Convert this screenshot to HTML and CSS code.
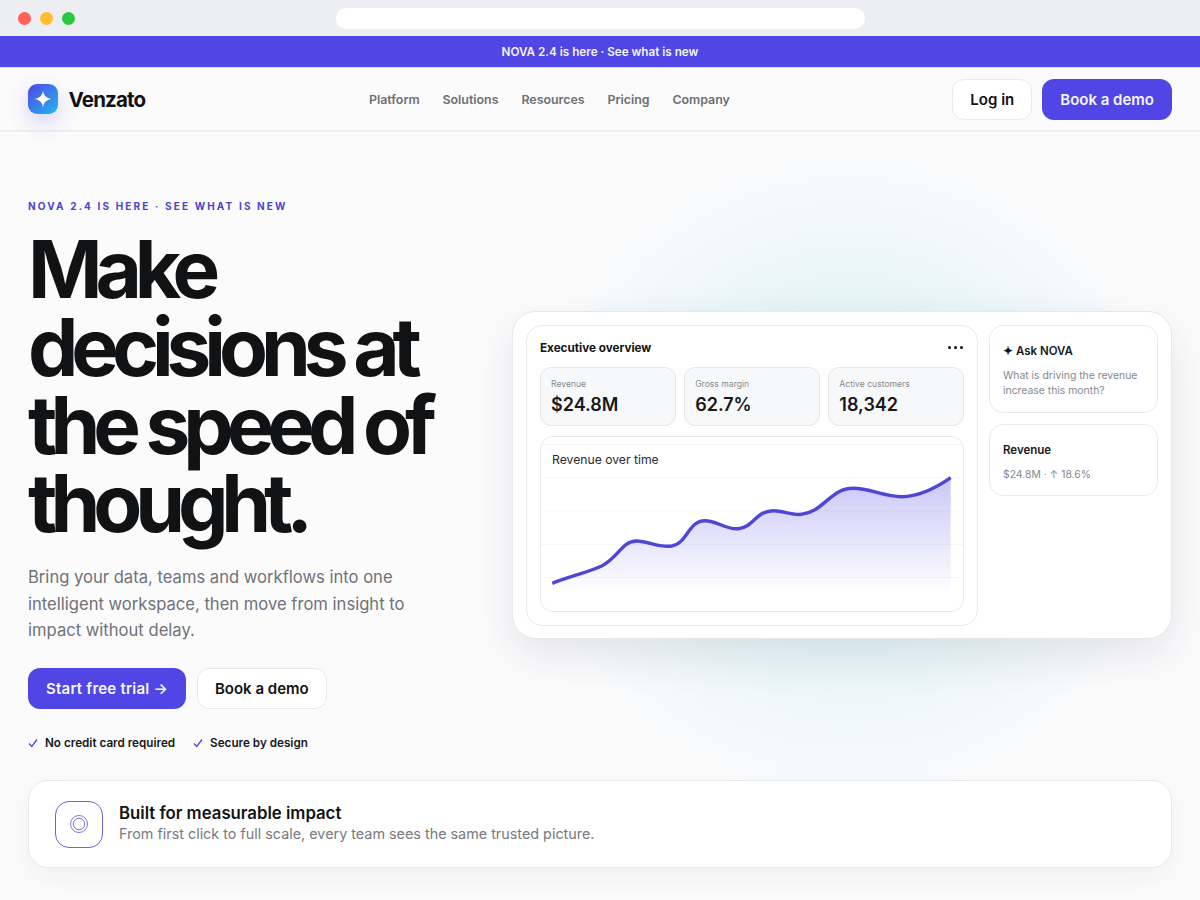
FILE: index.html
```html
<!DOCTYPE html>
<html lang="en">
<head>
<meta charset="utf-8">
<title>Venzato</title>
<link rel="stylesheet" href="styles.css">
</head>
<body>
<div class="chrome">
  <div class="lights"><span class="light red"></span><span class="light amber"></span><span class="light green"></span></div>
  <div class="address"></div>
</div>
<div class="announce">NOVA 2.4 is here · See what is new</div>
<header class="nav">
  <div class="brand">
    <span class="logo"><svg viewBox="0 0 16 16" width="18" height="18"><path d="M8 0.5C8.6 5 11 7.4 15.5 8C11 8.6 8.6 11 8 15.5C7.4 11 5 8.6 0.5 8C5 7.4 7.4 5 8 0.5Z" fill="#fff"/></svg></span>
    <span class="brand-name">Venzato</span>
  </div>
  <nav class="links"><a>Platform</a><a>Solutions</a><a>Resources</a><a>Pricing</a><a>Company</a></nav>
  <div class="actions"><a class="btn ghost">Log in</a><a class="btn primary">Book a demo</a></div>
</header>
<main class="hero">
  <section class="copy">
    <p class="eyebrow">NOVA 2.4 IS HERE · SEE WHAT IS NEW</p>
    <h1>Make decisions at the speed of thought.</h1>
    <p class="lead">Bring your data, teams and workflows into one intelligent workspace, then move from insight to impact without delay.</p>
    <div class="cta"><a class="btn primary trial">Start free trial →</a><a class="btn ghost">Book a demo</a></div>
    <ul class="checks">
      <li><svg viewBox="0 0 10 10" width="10" height="10"><path d="M1 5.5L3.8 8.5L9 1.5" fill="none" stroke="#4f46e5" stroke-width="1.3"/></svg>No credit card required</li>
      <li><svg viewBox="0 0 10 10" width="10" height="10"><path d="M1 5.5L3.8 8.5L9 1.5" fill="none" stroke="#4f46e5" stroke-width="1.3"/></svg>Secure by design</li>
    </ul>
  </section>
  <section class="visual">
    <div class="glow"></div>
    <div class="window">
      <div class="panel">
        <div class="panel-head"><strong>Executive overview</strong><span class="dots"><i></i><i></i><i></i></span></div>
        <div class="stats">
          <div class="stat"><span>Revenue</span><b>$24.8M</b></div>
          <div class="stat"><span>Gross margin</span><b>62.7%</b></div>
          <div class="stat"><span>Active customers</span><b>18,342</b></div>
        </div>
        <div class="chart">
          <svg class="plot" viewBox="0 0 424 176" width="424" height="176">
            <defs><linearGradient id="fade" gradientUnits="userSpaceOnUse" x1="0" y1="42" x2="0" y2="158"><stop offset="0" stop-color="#4f46e5" stop-opacity=".3"/><stop offset="1" stop-color="#4f46e5" stop-opacity="0"/></linearGradient></defs>
            <g stroke="#f5f6f8" stroke-width="1">
              <line x1="0" x2="424" y1="8.5" y2="8.5"/><line x1="0" x2="424" y1="41.5" y2="41.5"/><line x1="0" x2="424" y1="75" y2="75"/><line x1="0" x2="424" y1="108.5" y2="108.5"/><line x1="0" x2="424" y1="141.5" y2="141.5"/>
            </g>
            <path d="M12.3 147.3C28 141 46 137 61.7 130C78 122 82 105 96.7 105C108 105 119 112 131.7 110C148 107 148 84.7 165 84.7C177 84.7 186 94 198.3 92.7C214 91 216 74.7 233.3 74.7C243 74.7 252 79.5 261.7 78.3C285 75 290 52.3 313.3 52.3C330 52.3 344 60.7 361.7 60.7C380 60.7 396 52 410.7 41.7L410.7 158L12.3 158Z" fill="url(#fade)"/>
            <path d="M12.3 147.3C28 141 46 137 61.7 130C78 122 82 105 96.7 105C108 105 119 112 131.7 110C148 107 148 84.7 165 84.7C177 84.7 186 94 198.3 92.7C214 91 216 74.7 233.3 74.7C243 74.7 252 79.5 261.7 78.3C285 75 290 52.3 313.3 52.3C330 52.3 344 60.7 361.7 60.7C380 60.7 396 52 410.7 41.7" fill="none" stroke="#4f46d8" stroke-width="3.4"/>
          </svg>
          <span class="chart-title">Revenue over time</span>
        </div>
      </div>
      <aside class="side">
        <div class="side-card ask"><strong>✦ Ask NOVA</strong><p>What is driving the revenue increase this month?</p></div>
        <div class="side-card rev"><strong>Revenue</strong><p>$24.8M · ↑ 18.6%</p></div>
      </aside>
    </div>
  </section>
</main>
<section class="impact">
  <span class="impact-icon"><svg viewBox="0 0 20 20" width="20" height="20"><circle cx="10" cy="10" r="8.5" fill="none" stroke="#7d74dc" stroke-width="1"/><circle cx="10" cy="10" r="5.7" fill="none" stroke="#7d74dc" stroke-width="1"/></svg></span>
  <div class="impact-text">
    <h2>Built for measurable impact</h2>
    <p>From first click to full scale, every team sees the same trusted picture.</p>
  </div>
</section>
</body>
</html>
```
FILE: styles.css
```css
* { box-sizing: border-box; }
html, body { margin: 0; padding: 0; }
body {
  width: 1200px;
  height: 900px;
  overflow: hidden;
  background: #fbfbfc;
  color: #111214;
  font-family: Inter, "Liberation Sans", sans-serif;
}
.chrome {
  height: 36px;
  background: #eceef2;
  display: flex;
  align-items: center;
  position: relative;
  padding-left: 18px;
}
.lights { display: flex; gap: 9px; }
.light { width: 13px; height: 13px; border-radius: 50%; }
.red { background: #ff5f57; }
.amber { background: #febc2e; }
.green { background: #28c840; }
.address {
  width: 529px;
  height: 21px;
  margin-left: 261px;
  background: #fff;
  border-radius: 10px;
}
.announce {
  height: 32px;
  background: #4f46e5;
  border-bottom: 1px solid #dcdaf8;
  color: #f4f4ff;
  font-size: 11.7px;
  font-weight: 600;
  display: flex;
  align-items: center;
  justify-content: center;
}
.nav {
  height: 64px;
  padding: 0 28px;
  display: flex;
  align-items: center;
  justify-content: space-between;
  border-bottom: 2px solid #eeeff2;
  position: relative;
}
.brand { display: flex; align-items: center; gap: 10.5px; }
.logo {
  width: 30px;
  height: 30px;
  border-radius: 9px;
  background: linear-gradient(135deg, #4f46e5, #22b8f0);
  box-shadow: 0 8px 20px rgba(79, 70, 229, .22);
  display: flex;
  align-items: center;
  justify-content: center;
}
.brand-name { font-size: 20.5px; font-weight: 700; letter-spacing: -.04em; }
.links {
  display: flex;
  gap: 22.9px;
  font-size: 12.4px;
  font-weight: 600;
  color: #6b6f76;
  position: absolute;
  left: 369px;
}
.actions { display: flex; gap: 10px; }
.btn {
  display: inline-flex;
  align-items: center;
  justify-content: center;
  height: 41px;
  padding: 0 18px;
  border-radius: 12px;
  font-size: 15px;
  font-weight: 600;
}
.ghost { background: #fff; border: 1px solid #e8e9ed; color: #111214; padding: 0 17px; }
.primary { background: #4f46e5; color: #f6f6ff; }
.trial { letter-spacing: .22px; }
.hero {
  display: grid;
  grid-template-columns: 484px 660px;
  align-items: center;
  padding: 38px 28px 0;
  height: 648px;
}
.copy { width: 440px; align-self: start; margin-top: 30px; }
.eyebrow {
  margin: 0 0 18px;
  font-size: 10px;
  line-height: 12px;
  font-weight: 700;
  letter-spacing: .215em;
  color: #4c43cf;
}
h1 {
  margin: 0 0 22px;
  font-size: 80px;
  line-height: 78px;
  font-weight: 700;
  letter-spacing: -7.07px;
  color: #111214;
}
.lead {
  width: 420px;
  margin: 0 0 24px;
  font-size: 16.6px;
  line-height: 26.5px;
  color: #6f7279;
}
.cta { display: flex; gap: 11px; }
.checks {
  list-style: none;
  margin: 27.5px 0 0;
  padding: 0;
  display: flex;
  gap: 18px;
  font-size: 11.7px;
  font-weight: 600;
  line-height: 14px;
  color: #17181b;
}
.checks li { display: flex; align-items: center; gap: 7px; }
.visual { position: relative; }
.glow {
  position: absolute;
  left: 8px;
  top: -166px;
  width: 660px;
  height: 660px;
  background: radial-gradient(circle closest-side, rgba(34, 190, 210, .2), rgba(34, 190, 210, .1) 50%, rgba(34, 190, 210, 0) 100%);
}
.window {
  position: relative;
  height: 328px;
  padding: 13px;
  display: grid;
  grid-template-columns: 452px 169px;
  gap: 11px;
  background: #fff;
  border: 1px solid #e6e8ec;
  border-radius: 24px;
  box-shadow: 0 16px 44px rgba(30, 40, 60, .1);
}
.panel {
  height: 301px;
  padding: 0 13px;
  border: 1px solid #e8eaed;
  border-radius: 16px;
}
.panel-head {
  height: 41px;
  padding-top: 2px;
  display: flex;
  align-items: center;
  justify-content: space-between;
  font-size: 11.7px;
}
.panel-head strong { font-weight: 700; }
.dots { display: flex; gap: 2.5px; padding-right: 1px; }
.dots i { width: 3.5px; height: 3.5px; border-radius: 50%; background: #111214; }
.stats {
  display: grid;
  grid-template-columns: repeat(3, 1fr);
  gap: 8.5px;
}
.stat {
  height: 59px;
  padding: 11px 10px 0;
  background: #f7f8fa;
  border: 1px solid #e4e6ea;
  border-radius: 11px;
  display: flex;
  flex-direction: column;
}
.stat span { font-size: 8.6px; line-height: 11px; color: #85888e; }
.stat b { font-size: 18px; line-height: 26px; font-weight: 600; margin-top: 2px; color: #17181b; }
.chart {
  position: relative;
  height: 176px;
  margin-top: 10px;
  border: 1px solid #e8eaed;
  border-radius: 13px;
  overflow: hidden;
  padding: 15px 11px;
}
.plot { position: absolute; left: -1px; top: -1px; display: block; }
.chart-title { position: relative; font-size: 12.2px; line-height: 15px; display: block; color: #2a2b2f; }
.side { display: flex; flex-direction: column; gap: 11px; }
.side-card {
  border: 1px solid #e8eaed;
  border-radius: 14px;
  padding: 0 13px;
}
.side-card strong { display: block; font-size: 11.5px; font-weight: 600; line-height: 14px; color: #17181b; }
.side-card p { margin: 0; font-size: 10.4px; line-height: 15px; color: #85888e; }
.ask { height: 88px; padding-top: 18px; }
.ask p { margin-top: 10px; }
.rev { height: 72px; padding-top: 18px; }
.rev p { margin-top: 10px; }
.impact {
  position: relative;
  margin: 0 28px;
  height: 88px;
  padding: 0 26px;
  display: flex;
  align-items: center;
  gap: 16px;
  background: #fff;
  border: 1px solid #e6e8ec;
  border-radius: 20px;
  box-shadow: 0 10px 30px rgba(30, 34, 60, .05);
}
.impact-icon {
  width: 48px;
  height: 47px;
  border: 1px solid #6f63d9;
  border-radius: 14px;
  display: flex;
  align-items: center;
  justify-content: center;
}
.impact-text { padding-bottom: 2px; }
.impact h2 { margin: 0; font-size: 16.75px; line-height: 21px; font-weight: 600; }
.impact p { margin: 0; font-size: 14.37px; line-height: 20px; color: #77797f; }
```
